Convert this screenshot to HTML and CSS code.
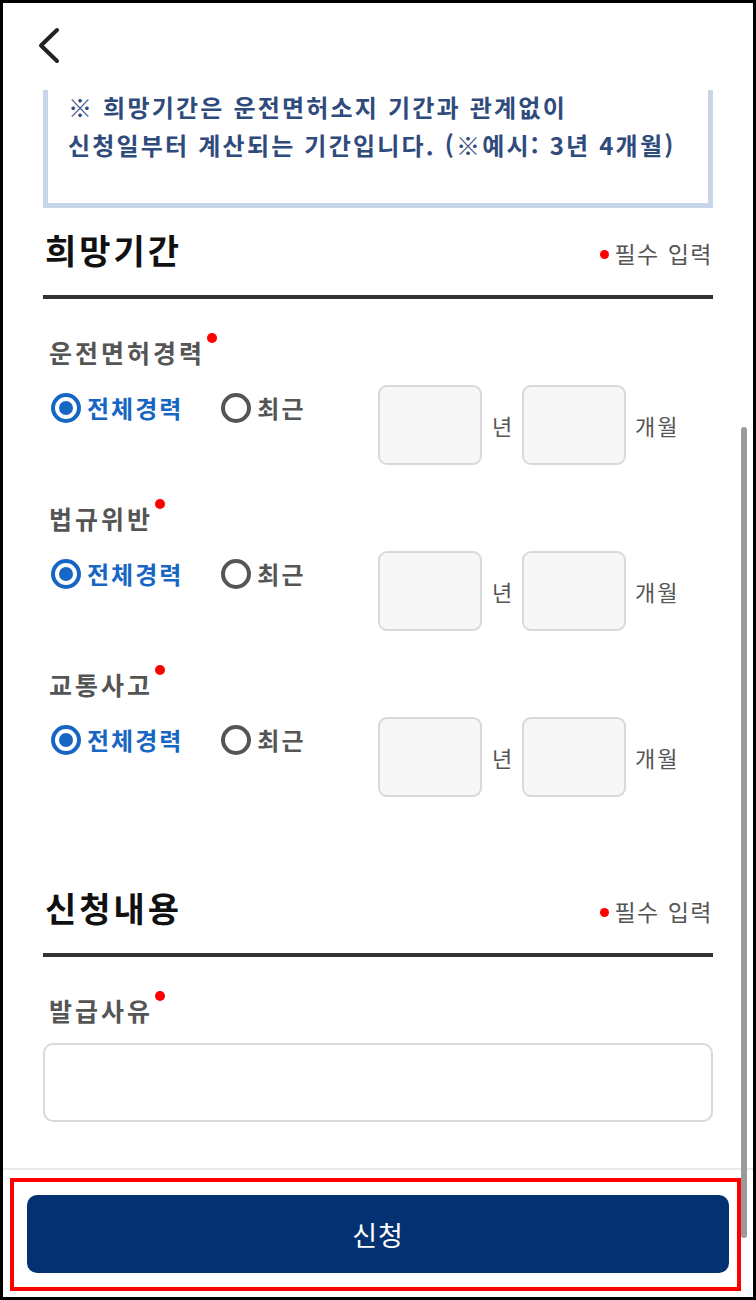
FILE: index.html
```html
<!DOCTYPE html>
<html lang="ko">
<head>
<meta charset="utf-8">
<title>희망기간</title>
<link rel="stylesheet" href="styles.css">
</head>
<body>
<div class="frame">
  <header class="topbar">
    <svg class="back" width="24" height="40" viewBox="0 0 24 40" aria-label="뒤로">
      <polyline points="20,4 4,19.5 20,35" fill="none" stroke="#222" stroke-width="4" stroke-linecap="round" stroke-linejoin="round"/>
    </svg>
  </header>

  <main class="content">
    <div class="notice">
      <p>※ 희망기간은 운전면허소지 기간과 관계없이<br>신청일부터 계산되는 기간입니다. (※예시: 3년 4개월)</p>
    </div>

    <div class="sec-head">
      <h2>희망기간</h2>
      <span class="req-note"><i class="dot"></i>필수 입력</span>
    </div>

    <div class="group">
      <div class="label">운전면허경력<i class="dot"></i></div>
      <div class="row">
        <div class="radios">
          <span class="radio checked"><i class="circle"></i>전체경력</span>
          <span class="radio"><i class="circle"></i>최근</span>
        </div>
        <div class="period">
          <span class="box"></span><span class="unit">년</span><span class="box"></span><span class="unit last">개월</span>
        </div>
      </div>
    </div>

    <div class="group">
      <div class="label">법규위반<i class="dot"></i></div>
      <div class="row">
        <div class="radios">
          <span class="radio checked"><i class="circle"></i>전체경력</span>
          <span class="radio"><i class="circle"></i>최근</span>
        </div>
        <div class="period">
          <span class="box"></span><span class="unit">년</span><span class="box"></span><span class="unit last">개월</span>
        </div>
      </div>
    </div>

    <div class="group">
      <div class="label">교통사고<i class="dot"></i></div>
      <div class="row">
        <div class="radios">
          <span class="radio checked"><i class="circle"></i>전체경력</span>
          <span class="radio"><i class="circle"></i>최근</span>
        </div>
        <div class="period">
          <span class="box"></span><span class="unit">년</span><span class="box"></span><span class="unit last">개월</span>
        </div>
      </div>
    </div>

    <div class="sec-head second">
      <h2>신청내용</h2>
      <span class="req-note"><i class="dot"></i>필수 입력</span>
    </div>

    <div class="group">
      <div class="label">발급사유<i class="dot"></i></div>
      <div class="textbox"></div>
    </div>
  </main>

  <footer class="footer">
    <button class="submit" type="button">신청</button>
  </footer>

  <div class="highlight"></div>
  <div class="scrollbar"></div>
</div>
</body>
</html>
```

FILE: styles.css
```css
* { box-sizing: border-box; }

html, body {
  margin: 0;
  padding: 0;
  background: #fff;
}

body {
  font-family: "Noto Sans CJK KR", "Noto Sans", sans-serif;
  color: #555;
}

.frame {
  position: relative;
  width: 756px;
  height: 1300px;
  border: 3px solid #000;
  display: flex;
  flex-direction: column;
  overflow: hidden;
  background: #fff;
}

.topbar {
  height: 87px;
  flex: 0 0 87px;
  padding: 23px 0 0 34px;
}

.back { display: block; }

.content {
  flex: 1 1 auto;
  overflow: hidden;
  padding: 0 40px;
}

.notice {
  border: 5px solid #c8d6ea;
  border-top: 0;
  padding: 0 10px 39px 20px;
}

.notice p {
  margin: -2px 0 0;
  font-size: 24px;
  line-height: 38px;
  font-weight: 700;
  color: #2f4b7c;
  letter-spacing: 2.2px;
  white-space: nowrap;
}

.sec-head {
  display: flex;
  justify-content: space-between;
  align-items: center;
  padding: 20px 0 23px;
  border-bottom: 4px solid #333;
}

.sec-head.second { margin-top: 69px; }

.sec-head h2 {
  margin: 0;
  font-size: 34px;
  line-height: 44px;
  font-weight: 700;
  color: #111;
  padding-left: 2px;
  letter-spacing: 3px;
}

.req-note {
  display: flex;
  align-items: center;
  padding-top: 6px;
  font-size: 23px;
  line-height: 30px;
  color: #555;
  letter-spacing: 1.5px;
}

.req-note .dot {
  width: 9px;
  height: 9px;
  margin-right: 5px;
  margin-top: 2px;
}

.dot {
  display: inline-block;
  border-radius: 50%;
  background: #f00;
}

.group { padding-top: 36px; }

.label {
  display: flex;
  align-items: flex-start;
  padding-left: 6px;
  font-size: 25px;
  line-height: 34px;
  font-weight: 700;
  color: #555;
  letter-spacing: 3px;
  margin-bottom: 16px;
}

.label .dot {
  width: 10px;
  height: 10px;
  margin-left: 2px;
  margin-top: -2px;
}

.row {
  display: flex;
  align-items: flex-start;
}

.radios {
  flex: 0 0 335px;
  display: flex;
  gap: 38px;
  padding: 6px 0 0 8px;
}

.radio {
  display: flex;
  align-items: center;
  gap: 6px;
  font-size: 24px;
  line-height: 34px;
  font-weight: 700;
  color: #555;
  letter-spacing: 2px;
}

.circle {
  width: 30px;
  height: 30px;
  border-radius: 50%;
  border: 4px solid #555;
  display: flex;
  align-items: center;
  justify-content: center;
}

.radio.checked { color: #1766c4; }

.radio.checked .circle { border-color: #1766c4; }

.radio.checked .circle::after {
  content: "";
  width: 14px;
  height: 14px;
  border-radius: 50%;
  background: #1766c4;
}

.period {
  display: flex;
  align-items: center;
}

.box {
  width: 104px;
  height: 80px;
  border: 2px solid #d9d9d9;
  border-radius: 9px;
  background: #f7f7f7;
}

.unit {
  width: 40px;
  text-align: center;
  font-size: 22px;
  color: #555;
}

.unit.last {
  width: auto;
  margin-left: 9px;
  letter-spacing: 2px;
}

.textbox {
  height: 79px;
  border: 2px solid #d9d9d9;
  border-radius: 10px;
  background: #fff;
}

.footer {
  flex: 0 0 129px;
  border-top: 2px solid #e8e8e8;
  padding: 25px 24px 0;
}

.submit {
  display: block;
  width: 100%;
  height: 78px;
  border: 0;
  border-radius: 10px;
  background: #043171;
  color: #fff;
  font-family: "Noto Sans CJK KR", "Noto Sans", sans-serif;
  font-size: 27px;
  font-weight: 400;
  letter-spacing: 1px;
}

.highlight {
  position: absolute;
  left: 7px;
  top: 1175px;
  width: 731px;
  height: 113px;
  border: 4px solid #f00;
  pointer-events: none;
}

.scrollbar {
  position: absolute;
  left: 738px;
  top: 424px;
  width: 6px;
  height: 811px;
  border-radius: 3px;
  background: #9a9a9a;
}
```
